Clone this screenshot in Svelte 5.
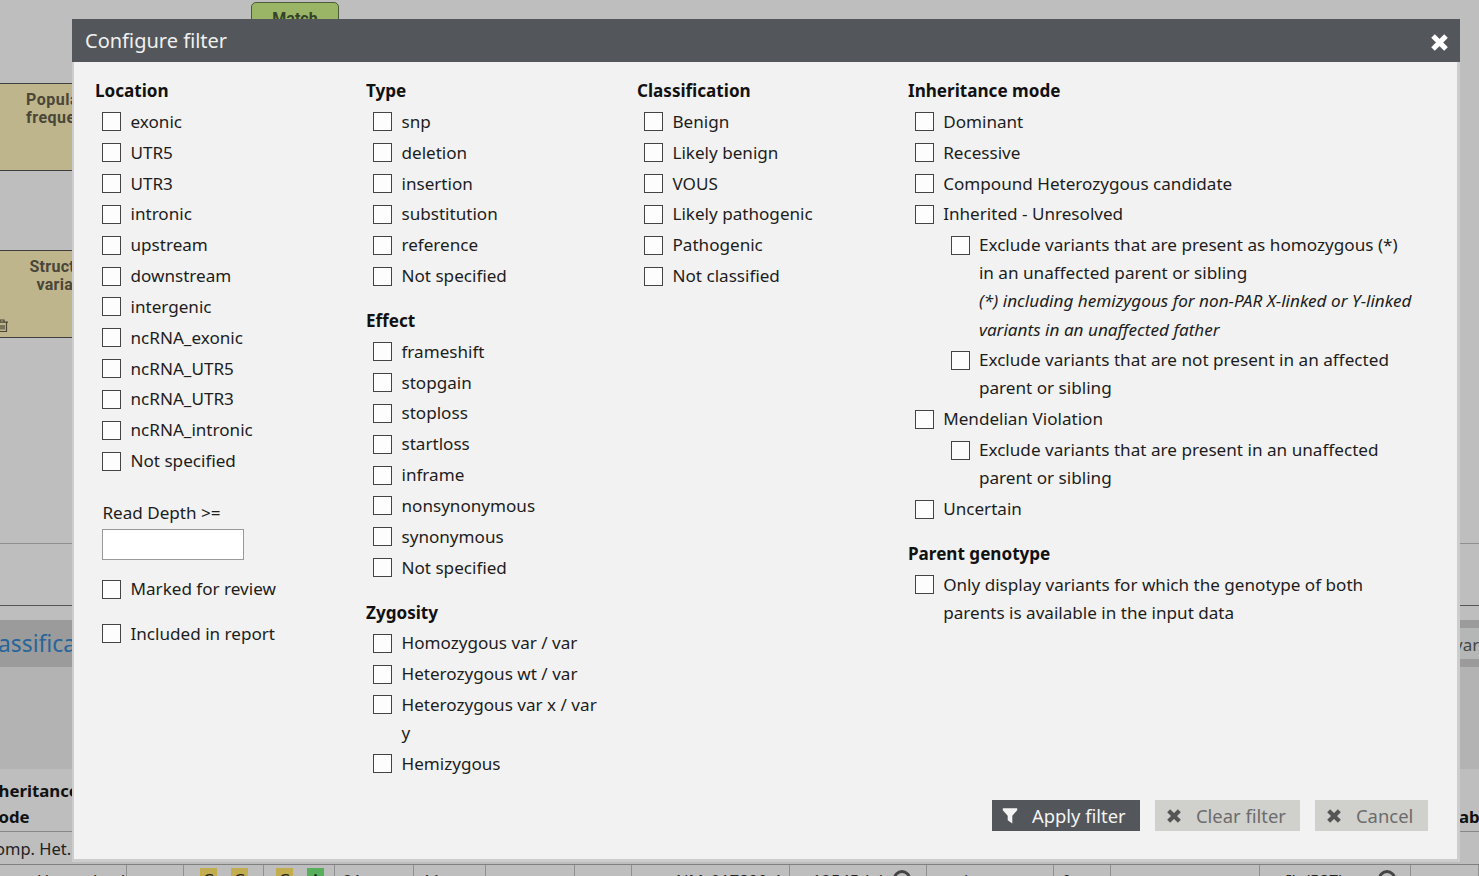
<script>
  const location = ['exonic', 'UTR5', 'UTR3', 'intronic', 'upstream', 'downstream', 'intergenic', 'ncRNA_exonic', 'ncRNA_UTR5', 'ncRNA_UTR3', 'ncRNA_intronic', 'Not specified'];
  const middle = [
    { title: 'Type', items: ['snp', 'deletion', 'insertion', 'substitution', 'reference', 'Not specified'] },
    { title: 'Effect', items: ['frameshift', 'stopgain', 'stoploss', 'startloss', 'inframe', 'nonsynonymous', 'synonymous', 'Not specified'] },
    { title: 'Zygosity', items: ['Homozygous var / var', 'Heterozygous wt / var', 'Heterozygous var x / var y', 'Hemizygous'] }
  ];
  const classification = ['Benign', 'Likely benign', 'VOUS', 'Likely pathogenic', 'Pathogenic', 'Not classified'];
  const inheritance = [
    { lines: ['Dominant'] },
    { lines: ['Recessive'] },
    { lines: ['Compound Heterozygous candidate'] },
    { lines: ['Inherited - Unresolved'] },
    {
      sub: true,
      lines: ['Exclude variants that are present as homozygous (*)', 'in an unaffected parent or sibling'],
      note: ['(*) including hemizygous for non-PAR X-linked or Y-linked', 'variants in an unaffected father']
    },
    { sub: true, lines: ['Exclude variants that are not present in an affected', 'parent or sibling'] },
    { lines: ['Mendelian Violation'] },
    { sub: true, lines: ['Exclude variants that are present in an unaffected', 'parent or sibling'] },
    { lines: ['Uncertain'] }
  ];
  const genotype = [{ lines: ['Only display variants for which the genotype of both', 'parents is available in the input data'] }];
</script>

{#snippet cross(size)}
  <svg class="cross" width={size} height={size} viewBox="0 0 16 16" aria-hidden="true">
    <path d="M3.6 3.6 12.4 12.4M12.4 3.6 3.6 12.4" fill="none" stroke="currentColor" stroke-width="4.8" stroke-linecap="square" />
  </svg>
{/snippet}

{#snippet option(lines, sub, note)}
  <label class="option" class:sub>
    <input type="checkbox" />
    <span class="text">
      {#each lines as line}<span class="line">{line}</span>{/each}
      {#if note}{#each note as line}<em class="line">{line}</em>{/each}{/if}
    </span>
  </label>
{/snippet}

<div class="page">
  <div class="canvas">
    <div class="node match">Match</div>
    <div class="node population">Population<br />frequency</div>
    <div class="node structural">
      Structural<br />variants
      <svg class="trash" width="12" height="14" viewBox="0 0 12 14" aria-hidden="true">
        <path d="M0 3.2h12M4 3V1h4v2M1.5 3.5v9h9v-9M4 6v4.5M6 6v4.5M8 6v4.5" fill="none" stroke="currentColor" stroke-width="1.2" />
      </svg>
    </div>
  </div>
  <div class="strip"></div>
  <div class="band"><span class="link">assifica</span><span class="chip">var</span></div>
  <div class="shade"></div>
  <div class="thead"><b>heritance<br />ode</b><b class="last">abe</b></div>
  <div class="trow"><span>omp. Het.</span></div>
  <div class="cells">
    <div>Unresolved</div>
    <div>-</div>
    <div class="alleles"><i>G</i><i>G</i></div>
    <div class="alleles"><i>G</i><i class="alt">A</i></div>
    <div class="near">21</div>
    <div class="near">11</div>
    <div></div>
    <div></div>
    <div class="right">NM_017890.4</div>
    <div class="ring mid">12545del<s></s></div>
    <div class="mid2">het</div>
    <div class="near">0</div>
    <div></div>
    <div class="ring">Ile(587)<s></s></div>
    <div></div>
  </div>
</div>

<section class="dialog">
  <header>
    <h1>Configure filter</h1>
    <button class="close" aria-label="Close">{@render cross(17)}</button>
  </header>
  <div class="body">
    <div class="columns">
      <div class="column">
        <section>
          <h2>Location</h2>
          {#each location as item}{@render option([item])}{/each}
        </section>
        <div class="depth">
          <label for="depth">Read Depth &gt;=</label>
          <input id="depth" type="text" />
        </div>
        <div class="single">{@render option(['Marked for review'])}</div>
        <div class="single">{@render option(['Included in report'])}</div>
      </div>
      <div class="column">
        {#each middle as group}
          <section>
            <h2>{group.title}</h2>
            {#each group.items as item}{@render option([item])}{/each}
          </section>
        {/each}
      </div>
      <div class="column">
        <section>
          <h2>Classification</h2>
          {#each classification as item}{@render option([item])}{/each}
        </section>
      </div>
      <div class="column">
        <section>
          <h2>Inheritance mode</h2>
          {#each inheritance as item}{@render option(item.lines, item.sub, item.note)}{/each}
        </section>
        <section>
          <h2>Parent genotype</h2>
          {#each genotype as item}{@render option(item.lines)}{/each}
        </section>
      </div>
    </div>
    <footer>
      <button class="apply">
        <svg width="16" height="16" viewBox="0 0 16 16" aria-hidden="true"><path d="M.8.3h14.4v2L10.3 7.8v7.7L5.7 12.2V7.8L.8 2.3z" fill="currentColor" /></svg>
        <span>Apply filter</span>
      </button>
      <button class="clear">{@render cross(14)}<span>Clear filter</span></button>
      <button class="cancel">{@render cross(14)}<span>Cancel</span></button>
    </footer>
  </div>
</section>

<style>
  :global(body) { margin: 0; overflow: hidden; background: #bebebe; }
  * { box-sizing: border-box; }
  .page, .dialog { font-family: 'Noto Sans', sans-serif; font-size: 17.1px; color: #222; }
  .page { height: 876px; overflow: hidden; background: #bebebe; }
  .canvas { position: relative; height: 544px; border-bottom: 1px solid #8f8f8f; }
  .node { position: absolute; border: 1px solid #3f3f3f; background: #beb58d; font: bold 16px/18px Roboto, sans-serif; color: #4a4638; text-align: center; }
  .match { left: 251px; top: 2px; width: 88px; height: 60px; padding-top: 7px; border-color: #4c5a38; border-radius: 5px; background: #99b565; color: #37422a; }
  .population { left: -20px; top: 83px; width: 168px; height: 88px; padding: 7.4px 0 0 45px; letter-spacing: .5px; text-align: left; }
  .structural { left: -20px; top: 250px; width: 170px; height: 88px; padding: 7.4px 0 0 3px; letter-spacing: .3px; }
  .trash { position: absolute; left: 15px; bottom: 4px; }
  .strip { height: 76px; background: linear-gradient(#555, #555) 0 61px / 100% 1px no-repeat; }
  .band { height: 47px; background: #9b9b9b; display: flex; justify-content: space-between; align-items: center; }
  .link { font-size: 22.8px; margin-left: -2px; color: #27659a; }
  .chip { width: 25px; height: 31px; line-height: 33px; background: #b5b7b6; color: #444; font-size: 17px; overflow: hidden; }
  .shade { height: 102px; background: #b3b3b3; }
  .thead { height: 63px; padding-top: 9.4px; display: flex; justify-content: space-between; line-height: 26px; color: #111; border-bottom: 1px solid #888; font-size: 16.8px; }
  .thead b:first-child { margin-left: -1.5px; }
  .last { padding-top: 26px; width: 20px; }
  .trow { height: 33px; line-height: 33px; border-bottom: 1px solid #808080; }
  .trow span { margin-left: -5px; font-size: 16.5px; }
  .cells { display: grid; grid-template-columns: 127px 57px 80px 71px 79px 72px 89px 57px 158px 137px 127px 57px 149px 151px 1fr; height: 30px; line-height: 31px; font-size: 16.5px; }
  .cells div { border-right: 1px solid #909090; padding-left: 37px; overflow: hidden; white-space: nowrap; }
  .cells div:nth-child(2) { padding-left: 27px; }
  .cells .alleles { display: flex; gap: 14px; padding: 3px 0 0 16px; }
  .cells .alleles:nth-child(4) { padding-left: 12px; }
  .alleles i { width: 17px; height: 25px; line-height: 23px; font-style: normal; text-align: center; background: #c2ae4e; }
  .alleles .alt { background: #57af5b; }
  .cells .near { padding-left: 8px; }
  .cells .right { padding-left: 44px; }
  .cells .mid { padding-left: 22px; }
  .ring { display: flex; }
  .ring s { flex: none; width: 18px; height: 18px; margin: 5px 0 0 10px; border: 3px solid #444; border-radius: 50%; }
  .cells .ring:nth-child(14) { padding-left: 26px; }
  .ring:nth-child(14) s { margin-left: 35px; }

  .dialog { position: absolute; left: 72px; top: 19px; width: 1388px; height: 843px; color: #1d1d1d; }
  header { height: 43px; background: #53565a; display: flex; justify-content: space-between; align-items: center; padding: 0 12px 0 13px; }
  h1 { margin: 0; font-size: 20px; font-weight: 400; line-height: 43px; color: #f0f0f0; }
  button { border: 0; padding: 0; font: inherit; color: inherit; }
  .close { display: flex; background: none; color: #fff; margin-top: 4px; }
  .body { height: 800px; border: 3px solid #cdcdcd; border-width: 0 3px 3px 2px; background: #f2f2f2; padding: 15.3px 29px 28px 21px; display: flex; flex-direction: column; justify-content: space-between; }
  .columns { display: grid; grid-template-columns: 271px 271px 271px 1fr; }
  .column { display: flex; flex-direction: column; }
  .column section { margin-bottom: 14.2px; display: flow-root; }
  h2 { margin: 0 0 2.4px; font-size: 17.1px; line-height: 28.2px; font-weight: 700; color: #111; }
  .option { display: flex; width: 250px; margin: 0 0 2.75px 7.3px; line-height: 28.1px; }
  .column:last-child .option { width: auto; white-space: nowrap; margin-left: 7px; }
  .column:last-child .option.sub { margin-left: 42.7px; font-size: 17.15px; }
  .line { display: block; }
  .option input { appearance: none; flex: none; width: 19px; height: 19px; margin: 4.4px 9.2px 0 0; border: 1.5px solid #444; background: #fdfdfd; }
  .text { flex: 1; }
  .column:nth-child(2) .text { flex: none; width: 205px; }
  .column:first-child section { margin-bottom: 0; }
  .depth { margin: 21px 0 15px 7.4px; line-height: 28.2px; }
  .depth label { display: block; }
  .depth input { display: block; width: 142px; height: 31px; margin-top: 2px; border: 1px solid #999; background: #fff; padding: 0 6px; font: inherit; }
  .single { margin-bottom: 14px; display: flow-root; }
  footer { display: flex; justify-content: flex-end; gap: 15px; }
  footer button { height: 31px; display: flex; align-items: center; gap: 15px; font-size: 18.4px; background: #d0d0cc; color: #6c6c6c; padding-left: 12px; white-space: nowrap; }
  footer .apply { width: 148px; gap: 14px; padding-left: 10px; background: #53565a; color: #f4f4f4; }
  .clear { width: 145px; }
  .cancel { width: 113px; }
  footer .cross { color: #555; }
</style>
